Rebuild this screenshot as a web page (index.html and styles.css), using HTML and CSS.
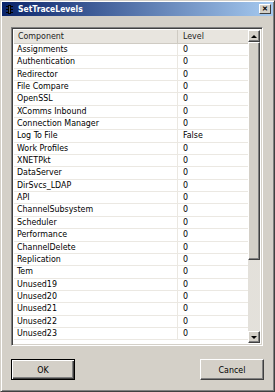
FILE: index.html
```html
<!DOCTYPE html>
<html lang="en">
<head>
    <meta charset="UTF-8">
    <title>SetTraceLevels</title>
    <link rel="stylesheet" href="styles.css">
</head>
<body>
    <div class="window">
        <div class="titlebar">
            <svg class="app-icon" width="7" height="9" viewBox="0 0 7 9">
                <rect x="2" y="0" width="3" height="9" fill="#000"/>
                <path d="M0 1.5h7M0 4.5h7M0 7.5h7" stroke="#000" stroke-width="1"/>
                <rect x="3" y="1" width="1" height="7" fill="#555"/>
            </svg>
            <span class="title">SetTraceLevels</span>
            <span class="close">&#x2715;</span>
        </div>

        <div class="content">
            <div class="listbox">
                <div class="grid">
                    <div class="row head">
                        <div class="cell name">Component</div>
                        <div class="cell level">Level</div>
                    </div>
                    <div class="row"><div class="cell name">Assignments</div><div class="cell level">0</div></div>
                    <div class="row"><div class="cell name">Authentication</div><div class="cell level">0</div></div>
                    <div class="row"><div class="cell name">Redirector</div><div class="cell level">0</div></div>
                    <div class="row"><div class="cell name">File Compare</div><div class="cell level">0</div></div>
                    <div class="row"><div class="cell name">OpenSSL</div><div class="cell level">0</div></div>
                    <div class="row"><div class="cell name">XComms Inbound</div><div class="cell level">0</div></div>
                    <div class="row"><div class="cell name">Connection Manager</div><div class="cell level">0</div></div>
                    <div class="row"><div class="cell name">Log To File</div><div class="cell level">False</div></div>
                    <div class="row"><div class="cell name">Work Profiles</div><div class="cell level">0</div></div>
                    <div class="row"><div class="cell name">XNETPkt</div><div class="cell level">0</div></div>
                    <div class="row"><div class="cell name">DataServer</div><div class="cell level">0</div></div>
                    <div class="row"><div class="cell name">DirSvcs_LDAP</div><div class="cell level">0</div></div>
                    <div class="row"><div class="cell name">API</div><div class="cell level">0</div></div>
                    <div class="row"><div class="cell name">ChannelSubsystem</div><div class="cell level">0</div></div>
                    <div class="row"><div class="cell name">Scheduler</div><div class="cell level">0</div></div>
                    <div class="row"><div class="cell name">Performance</div><div class="cell level">0</div></div>
                    <div class="row"><div class="cell name">ChannelDelete</div><div class="cell level">0</div></div>
                    <div class="row"><div class="cell name">Replication</div><div class="cell level">0</div></div>
                    <div class="row"><div class="cell name">Tem</div><div class="cell level">0</div></div>
                    <div class="row"><div class="cell name">Unused19</div><div class="cell level">0</div></div>
                    <div class="row"><div class="cell name">Unused20</div><div class="cell level">0</div></div>
                    <div class="row"><div class="cell name">Unused21</div><div class="cell level">0</div></div>
                    <div class="row"><div class="cell name">Unused22</div><div class="cell level">0</div></div>
                    <div class="row"><div class="cell name">Unused23</div><div class="cell level">0</div></div>
                </div>
                <div class="scrollbar">
                    <div class="sb-btn"><span class="arrow up"></span></div>
                    <div class="sb-thumb"></div>
                    <div class="sb-track"></div>
                    <div class="sb-btn"><span class="arrow down"></span></div>
                </div>
            </div>

            <div class="buttons">
                <button class="btn default">OK</button>
                <button class="btn">Cancel</button>
            </div>
        </div>
    </div>
</body>
</html>
```

FILE: styles.css
```css
body {
    margin: 0;
    padding: 0;
    font-family: "DejaVu Sans Condensed", "Liberation Sans", Arial, sans-serif;
    font-size: 8.8px;
    color: #000;
}

.window {
    width: 275px;
    height: 392px;
    box-sizing: border-box;
    background-color: #d4d0c8;
    border: 1px solid;
    border-color: #d4d0c8 #404040 #404040 #d4d0c8;
    box-shadow: inset 1px 1px 0 #fff, inset -1px -1px 0 #808080;
    padding: 1px;
    display: flex;
    flex-direction: column;
}

.titlebar {
    height: 14px;
    background: linear-gradient(to right, #0a246a, #a6caf0);
    display: flex;
    align-items: center;
    padding: 0 2px 0 4px;
}

.app-icon {
    margin-right: 5px;
}

.title {
    color: #fff;
    font-weight: bold;
    font-size: 8.5px;
    flex: 1;
}

.close {
    width: 12px;
    height: 10px;
    box-sizing: border-box;
    background-color: #d4d0c8;
    border: 1px solid;
    border-color: #fff #404040 #404040 #fff;
    font-family: "Liberation Sans", Arial, sans-serif;
    font-size: 7px;
    font-weight: bold;
    line-height: 8px;
    text-align: center;
}

.content {
    flex: 1;
    display: flex;
    flex-direction: column;
    padding: 11px 10px 10px 9px;
}

.listbox {
    height: 319px;
    box-sizing: border-box;
    display: flex;
    border: 1px solid;
    border-color: #808080 #fff #fff #808080;
    box-shadow: inset 1px 1px 0 #404040, inset -1px -1px 0 #d4d0c8;
    padding: 2px;
    background-color: #fff;
}

.grid {
    flex: 1;
    overflow: hidden;
}

.row {
    display: flex;
    height: 12.35px;
    box-sizing: border-box;
    border-bottom: 1px solid #ebe8e2;
    line-height: 11.5px;
}

.row.head {
    height: 14px;
    line-height: 13px;
    background-color: #e8e5df;
    border-bottom: 1px solid #cfcbc3;
    color: #222;
}

.cell {
    white-space: nowrap;
    overflow: hidden;
}

.cell.name {
    width: 164px;
    padding-left: 3px;
    box-sizing: border-box;
    border-right: 1px solid #ebe8e2;
}

.row.head .cell.name {
    padding-left: 4px;
    border-right: 1px solid #cfcbc3;
}

.cell.level {
    flex: 1;
    padding-left: 5px;
}

.scrollbar {
    width: 12px;
    display: flex;
    flex-direction: column;
    background-color: #d4d0c8;
}

.sb-btn,
.sb-thumb {
    box-sizing: border-box;
    background-color: #d4d0c8;
    border: 1px solid;
    border-color: #fff #404040 #404040 #fff;
    box-shadow: inset -1px -1px 0 #808080;
}

.sb-btn {
    height: 12px;
    display: flex;
    align-items: center;
    justify-content: center;
}

.sb-thumb {
    height: 218px;
}

.sb-track {
    flex: 1;
    background-color: #f0eeea;
    background-image: radial-gradient(#d4d0c8 0.6px, transparent 0.8px);
    background-size: 2px 2px;
}

.arrow {
    width: 0;
    height: 0;
    border-left: 3px solid transparent;
    border-right: 3px solid transparent;
}

.arrow.up {
    border-bottom: 3px solid #000;
}

.arrow.down {
    border-top: 3px solid #000;
}

.buttons {
    display: flex;
    justify-content: space-between;
    margin-top: 13px;
    margin-right: -1px;
}

.btn {
    width: 64px;
    height: 21px;
    box-sizing: border-box;
    font-family: "DejaVu Sans Condensed", "Liberation Sans", Arial, sans-serif;
    font-size: 8.8px;
    color: #000;
    background-color: #d4d0c8;
    border: 1px solid;
    border-color: #fff #404040 #404040 #fff;
    box-shadow: inset -1px -1px 0 #808080;
    padding: 0;
}

.btn.default {
    border: 1px solid #000;
    box-shadow: inset 1px 1px 0 #fff, inset -1px -1px 0 #404040, inset -2px -2px 0 #808080;
}
```
